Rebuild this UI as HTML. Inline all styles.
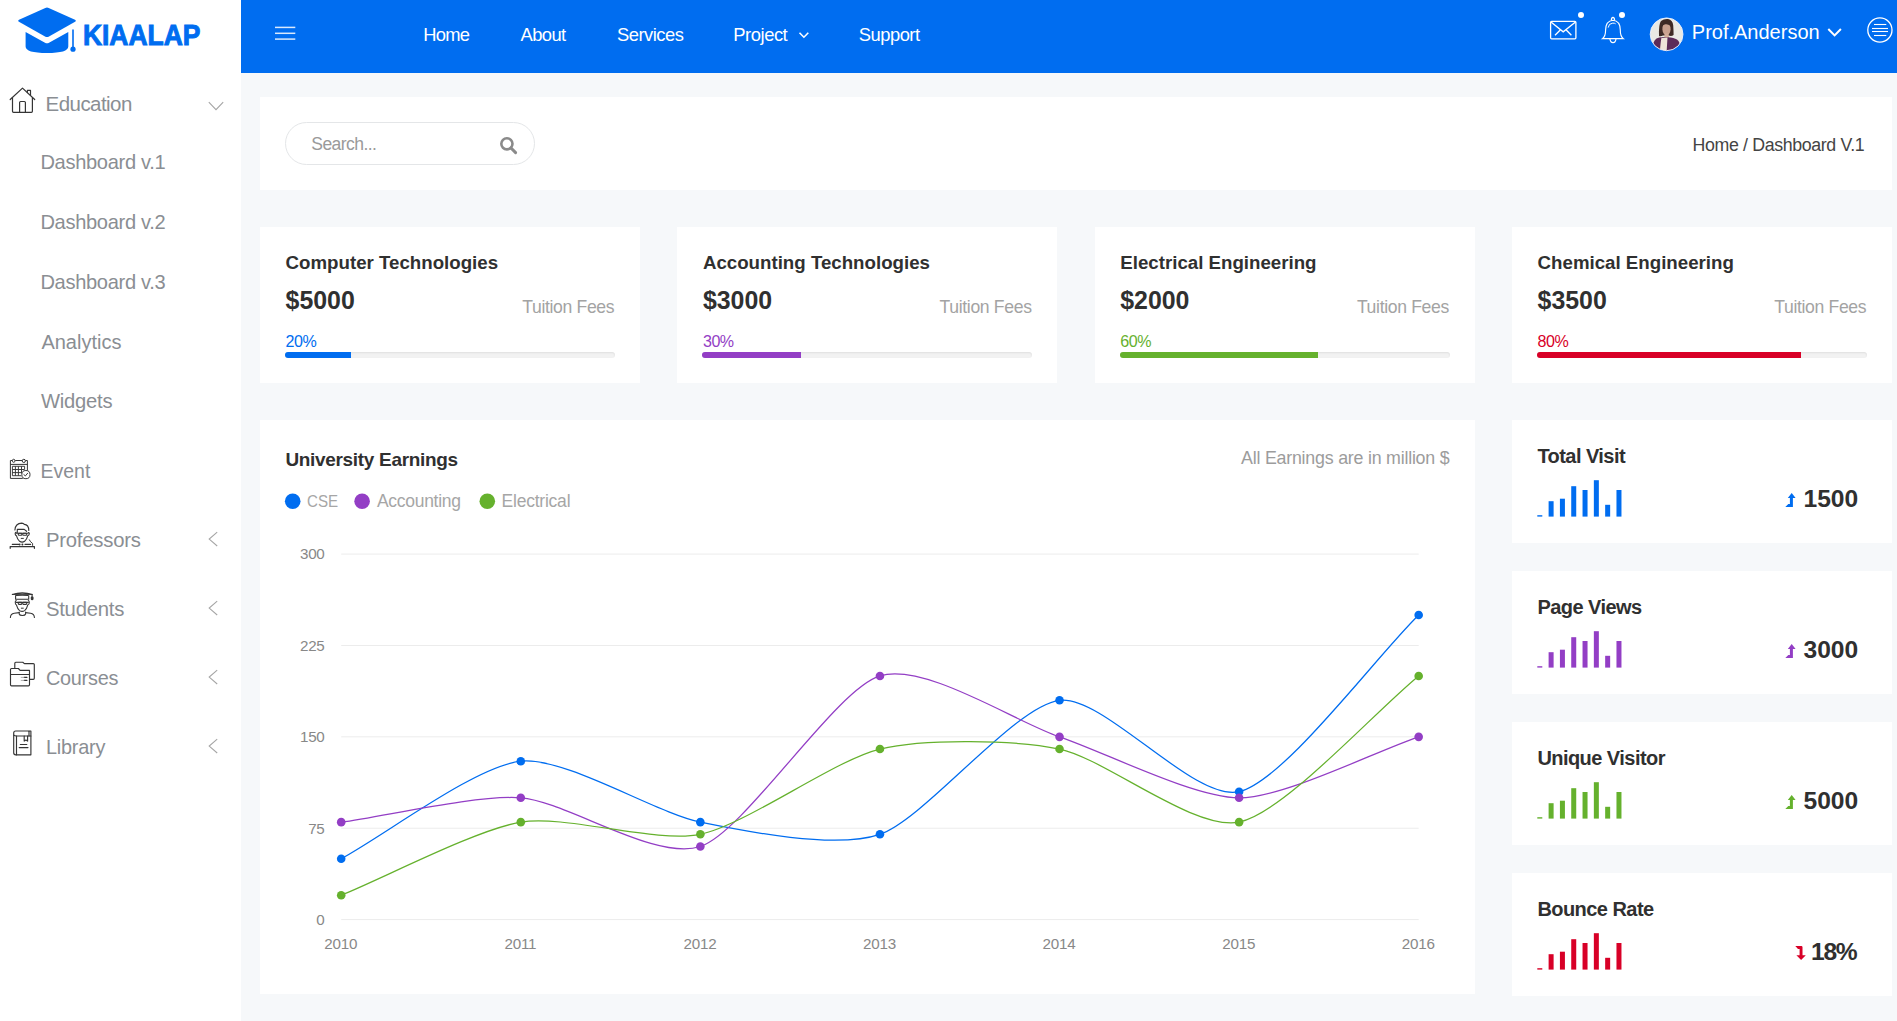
<!DOCTYPE html><html><head><meta charset="utf-8"><title>Kiaalap Dashboard</title><style>
html,body{margin:0;padding:0;}
body{width:1897px;height:1021px;overflow:hidden;position:relative;background:#F6F8FA;font-family:"Liberation Sans",sans-serif;}
.t{position:absolute;line-height:1;white-space:nowrap;}
.box{position:absolute;background:#fff;}
svg{position:absolute;overflow:visible;}
</style></head><body>
<div class="box" style="left:0;top:0;width:241px;height:1021px;background:#fff"></div>
<div class="box" style="left:241px;top:0;width:1656px;height:73px;background:#006DF0"></div>
<svg style="left:0;top:0" width="240" height="60" viewBox="0 0 240 60">
<path d="M18.5 21.6 Q17.6 20.6 19 19.8 L45.3 7.9 Q47 7.2 48.7 7.9 L75 19.8 Q76.4 20.6 75.5 21.6 L49 36.5 Q47 37.6 45 36.5 Z" fill="#006DF0"/>
<path d="M25.6 31.9 L45 42.8 Q47 43.9 49 42.8 L68.3 31.9 L68.3 46.5 Q68.3 53 47 53 Q25.6 53 25.6 46.5 Z" fill="#006DF0"/>
<rect x="72.2" y="29.5" width="1.6" height="18" fill="#006DF0"/>
<circle cx="73" cy="49.2" r="2.6" fill="#006DF0"/>
<text x="82.9" y="44.8" font-family="Liberation Sans" font-weight="bold" font-size="29.5" fill="#006DF0" stroke="#006DF0" stroke-width="1.0" textLength="117.6" lengthAdjust="spacingAndGlyphs">KIAALAP</text>
</svg>
<div class="t" style="left:45.60px;top:94.25px;font-size:20.48px;color:#8a8e93;letter-spacing:-0.542px;">Education</div>
<div class="t" style="left:40.40px;top:151.98px;font-size:20.09px;color:#8a8e93;letter-spacing:-0.313px;">Dashboard v.1</div>
<div class="t" style="left:40.40px;top:211.83px;font-size:20.09px;color:#8a8e93;letter-spacing:-0.313px;">Dashboard v.2</div>
<div class="t" style="left:40.40px;top:271.68px;font-size:20.09px;color:#8a8e93;letter-spacing:-0.313px;">Dashboard v.3</div>
<div class="t" style="left:41.40px;top:331.61px;font-size:20.0px;color:#8a8e93;">Analytics</div>
<div class="t" style="left:41.00px;top:391.29px;font-size:20.2px;color:#8a8e93;letter-spacing:-0.238px;">Widgets</div>
<div class="t" style="left:40.50px;top:461.78px;font-size:19.5px;color:#8a8e93;">Event</div>
<div class="t" style="left:45.90px;top:530.31px;font-size:20.3px;color:#8a8e93;letter-spacing:-0.211px;">Professors</div>
<div class="t" style="left:45.90px;top:599.31px;font-size:20.3px;color:#8a8e93;letter-spacing:-0.224px;">Students</div>
<div class="t" style="left:45.90px;top:668.65px;font-size:19.89px;color:#8a8e93;letter-spacing:-0.242px;">Courses</div>
<div class="t" style="left:45.90px;top:737.65px;font-size:19.89px;color:#8a8e93;letter-spacing:-0.199px;">Library</div>
<svg style="left:0;top:80px" width="40" height="40" viewBox="0 80 40 40" fill="none" stroke="#353535" stroke-width="1.2" stroke-linejoin="round" stroke-linecap="round">
<path d="M10.2 99.5 L22.5 88.1 L34.7 99.5"/><path d="M12.5 97.6 V111.3 Q12.5 112.3 13.5 112.3 H31.4 Q32.4 112.3 32.4 111.3 V97.6"/><path d="M19.6 112.3 V102.5 Q19.6 101.5 20.6 101.5 H24.4 Q25.4 101.5 25.4 102.5 V112.3"/><path d="M27.4 92.6 V90.4 H30.5 V95.3"/></svg>
<svg style="left:0;top:0" width="240" height="120"><path d="M208.8 102.2 L216 109.6 L223.2 102.2" fill="none" stroke="#a5a5a5" stroke-width="1.1"/></svg>
<svg style="left:0;top:0" width="240" height="800"><path d="M217.2 532.2 L209.2 539.1 L217.2 546.0" fill="none" stroke="#a5a5a5" stroke-width="1.1"/></svg>
<svg style="left:0;top:0" width="240" height="800"><path d="M217.2 601.2 L209.2 608.1 L217.2 615.0" fill="none" stroke="#a5a5a5" stroke-width="1.1"/></svg>
<svg style="left:0;top:0" width="240" height="800"><path d="M217.2 670.2 L209.2 677.1 L217.2 684.0" fill="none" stroke="#a5a5a5" stroke-width="1.1"/></svg>
<svg style="left:0;top:0" width="240" height="800"><path d="M217.2 739.2 L209.2 746.1 L217.2 753.0" fill="none" stroke="#a5a5a5" stroke-width="1.1"/></svg>
<svg style="left:0;top:450px" width="40" height="40" viewBox="0 450 40 40" fill="none" stroke="#353535" stroke-width="1" stroke-linejoin="round">
<path d="M12.1 460.5 H10.4 V478.4 H22.8"/><path d="M15.2 460.5 H22.1"/><path d="M25.5 460.5 H27.4 V470.5"/>
<line x1="10.4" y1="464.4" x2="27.4" y2="464.4"/>
<rect x="12.5" y="459.3" width="2.3" height="3" rx="1"/><circle cx="23.8" cy="460.9" r="1.6"/>
<path d="M12.4 475.7 V466.3 H24.6 V469.8 M12.4 469.5 H24.1 M12.4 472.6 H21.2 M12.4 475.7 H21.2 M15.4 466.3 V475.7 M18.4 466.3 V475.7 M21.5 466.3 V473.5" stroke-width="0.95"/>
<circle cx="25.9" cy="474.6" r="4.1"/><path d="M23.6 474.4 L25.4 475.9 L27.9 472.9"/></svg>
<svg style="left:0;top:515px" width="40" height="40" viewBox="0 515 40 40" fill="none" stroke="#353535" stroke-width="1.1" stroke-linejoin="round" stroke-linecap="round">
<path d="M14.9 530 Q15.3 523.3 21.8 523.1 Q23.6 523.1 24.3 524.4 Q28.7 524.6 28.8 530.5"/>
<path d="M17.3 532.6 V529.4 H24.2 L26.6 531.3"/>
<path d="M16.2 532.4 Q15 532.2 15.2 534 Q15.6 535.6 16.4 535.6 Q17.5 539.5 19.6 541.3 Q22.1 543 24.6 541.3 Q26.8 539.5 27.8 535.6 Q29 535.5 29.3 534 Q29.4 532.3 28.3 532.5"/>
<path d="M16.2 533.3 H28.3"/><rect x="18.3" y="533.3" width="3.5" height="2" rx="0.6"/><rect x="22.8" y="533.3" width="3.9" height="2" rx="0.6"/>
<path d="M21.2 538.4 H23.4" stroke-width="1"/>
<path d="M12.3 544.4 H18.6 M25 544.4 H30.6"/><circle cx="19.6" cy="544.4" r="0.45" fill="#353535"/><circle cx="22.4" cy="544.4" r="0.45" fill="#353535"/>
<path d="M10.2 548.3 V546.6 H34.4 V548.3" stroke-width="1.2"/>
<path d="M29.3 539.8 Q30.3 542 32.6 543.5 V545.4" stroke-width="1"/></svg>
<svg style="left:0;top:585px" width="40" height="40" viewBox="0 585 40 40" fill="none" stroke="#353535" stroke-width="1.1" stroke-linejoin="round" stroke-linecap="round">
<path d="M12.3 594.4 Q22.3 591 32.3 594.4 Q22.3 593.8 12.3 594.4 Z"/><path d="M16.5 595.4 Q22.3 594.9 27.8 595.4"/>
<path d="M15.6 595.5 V599.3 H28.7 V595.5"/><path d="M32.1 594.5 V597.8" /><rect x="31.3" y="597" width="1.7" height="2.6" rx="0.6" fill="#353535"/>
<path d="M16.2 600.5 Q15 600.9 15.3 603 Q15.6 604.8 16.4 604.8 Q17.5 608.8 19.6 610.6 Q22.1 612.2 24.6 610.6 Q26.8 608.8 27.8 604.8 Q29 604.7 29.3 603 Q29.4 601 28.3 600.6"/>
<path d="M16.3 602.4 H28.3"/><rect x="18.3" y="602.4" width="3.5" height="2" rx="0.6"/><rect x="22.8" y="602.4" width="3.9" height="2" rx="0.6"/>
<path d="M21.3 608.2 H23.3" stroke-width="1"/>
<path d="M19.2 612 V614 Q19.6 615.5 22.4 615.5 Q25.2 615.5 25.6 614 V612"/>
<path d="M10.4 617.5 Q10.5 613.8 14.2 613.2 L19.2 612.6 M25.6 612.6 L30.6 613.2 Q34.3 613.8 34.4 617.5"/></svg>
<svg style="left:0;top:655px" width="40" height="40" viewBox="0 655 40 40" fill="none" stroke="#353535" stroke-width="1.15" stroke-linejoin="round" stroke-linecap="round">
<path d="M14.8 667.8 V663.2 Q14.8 662.2 15.8 662.2 H22.8 L24.4 663.6 H33.3 Q34.3 663.6 34.3 664.6 V678.3 Q34.3 679.3 33.3 679.3 H30"/>
<path d="M10.5 684.8 V669.5 Q10.5 668.5 11.5 668.5 H18.4 L20.1 670.4 H29.5 V684.8 Q29.5 685.8 28.5 685.8 H11.5 Q10.5 685.8 10.5 684.8 Z"/>
<line x1="10.5" y1="674.5" x2="29.5" y2="674.5"/>
<path d="M24.2 677.4 H26.9 M24.2 680.4 H26.9" stroke-width="1.2"/><path d="M21.2 677.4 H24 M21.2 680.4 H24" stroke-width="0.8" stroke="#999"/></svg>
<svg style="left:0;top:725px" width="40" height="40" viewBox="0 725 40 40" fill="none" stroke="#353535" stroke-width="1.15" stroke-linejoin="round" stroke-linecap="round">
<path d="M15.7 731 H30.9 V754.8 H15.7 Q13.7 754.8 13.7 752.8 V733 Q13.7 731 15.7 731 Z"/>
<path d="M13.9 735.2 Q14.6 736 16.5 736 H30.9"/><path d="M16.5 736 V754.8"/><path d="M29 731.2 V736"/>
<path d="M24.2 736 V741.1 L25.9 740 L27.6 741.1 V736"/>
<path d="M20.3 744.5 H26.8 M19.2 747.6 H28"/></svg>
<div class="t" style="left:423.30px;top:25.93px;font-size:18.38px;color:#ffffff;letter-spacing:-0.778px;">Home</div>
<div class="t" style="left:520.50px;top:25.93px;font-size:18.38px;color:#ffffff;letter-spacing:-0.572px;">About</div>
<div class="t" style="left:616.90px;top:25.93px;font-size:18.38px;color:#ffffff;letter-spacing:-0.479px;">Services</div>
<div class="t" style="left:733.30px;top:25.93px;font-size:18.38px;color:#ffffff;letter-spacing:-0.454px;">Project</div>
<div class="t" style="left:858.80px;top:25.93px;font-size:18.38px;color:#ffffff;letter-spacing:-0.511px;">Support</div>
<svg style="left:0;top:0" width="1897" height="73"><g stroke="rgba(255,255,255,0.85)" stroke-width="1.5"><line x1="275" y1="27.4" x2="295.3" y2="27.4"/><line x1="275" y1="33.3" x2="295.3" y2="33.3"/><line x1="275" y1="39.1" x2="295.3" y2="39.1"/></g><path d="M799.5 32.8 L803.9 37.2 L808.3 32.8" fill="none" stroke="#fff" stroke-width="1.6"/><g fill="none" stroke="#fff" stroke-width="1.3"><rect x="1550.6" y="21.4" width="25.3" height="17.4" rx="1"/><path d="M1551 22 L1563.2 31.8 L1575.5 22"/><path d="M1555 35.3 L1560.5 29.8 M1571.4 35.3 L1566 29.8"/></g><circle cx="1581" cy="14.9" r="3" fill="#fff"/><g fill="none" stroke="#fff" stroke-width="1.15"><path d="M1613 20.3 Q1605.7 21 1605.6 30 Q1605.6 36.3 1602.5 38.6 L1623.3 38.6 Q1620.2 36.3 1620.3 30 Q1620.2 21 1613 20.3 Z"/><path d="M1611.3 20.5 Q1611.3 17.5 1613 17.4 Q1614.6 17.5 1614.6 20.5"/><path d="M1609.9 38.8 Q1610.5 42.5 1613 42.6 Q1615.5 42.5 1616 38.8"/><path d="M1608.2 27.6 Q1608.5 23.4 1612.8 23.1 Q1614.8 23.1 1615.6 23.8" stroke-width="1.0"/></g><circle cx="1622" cy="14.9" r="3" fill="#fff"/><path d="M1828.3 29 L1834.6 35.4 L1840.9 29" fill="none" stroke="#fff" stroke-width="2"/><circle cx="1879.9" cy="30" r="12.1" fill="none" stroke="#fff" stroke-width="1.3"/><g stroke="#fff" stroke-width="1.1"><line x1="1874" y1="24.5" x2="1886.3" y2="24.5"/><line x1="1872" y1="28.5" x2="1888" y2="28.5"/><line x1="1872" y1="31.5" x2="1888" y2="31.5"/><line x1="1874" y1="35.5" x2="1886.3" y2="35.5"/></g></svg>
<svg style="left:1646px;top:14px" width="42" height="42" viewBox="1646 14 42 42"><defs><clipPath id="av"><circle cx="1666.6" cy="34.3" r="16.3"/></clipPath></defs>
<g clip-path="url(#av)"><rect x="1646" y="14" width="42" height="42" fill="#e9e9e4"/>
<path d="M1659 36 Q1658.6 24 1661 21 Q1664 18.6 1668 19 Q1672.6 19.8 1673.2 25 Q1673.6 31 1673.6 35 Q1671.5 36.6 1668.5 35.5 L1663 35.5 Q1660.5 36.8 1659 36 Z" fill="#3e2a25"/>
<path d="M1662.4 29.5 Q1662 23.6 1666.4 23.4 Q1670.8 23.6 1670.6 29.5 Q1670.2 34.6 1666.5 35 Q1662.8 34.6 1662.4 29.5 Z" fill="#c9a08e"/>
<path d="M1662 25.5 Q1664 21.2 1668.5 21.8 Q1671.6 22.6 1671.8 27 Q1669.5 23.8 1665.5 24.2 Q1663.5 24.6 1662 25.5 Z" fill="#3e2a25"/>
<path d="M1664.6 33.5 H1668.6 L1669 38 H1664.2 Z" fill="#d2ab98"/>
<path d="M1652 52 Q1652.5 41 1656.5 38.6 Q1659 37.3 1662.5 37 L1665 37.5 L1668 37.2 Q1674 37.5 1677 39.6 Q1680.6 42 1681 52 Z" fill="#5c2b58"/>
<path d="M1661.5 37.4 Q1664 38.6 1667.5 37.6 L1666.6 52 L1659.8 52 Q1660.6 42 1661.5 37.4 Z" fill="#eee3d8"/>
</g><circle cx="1666.6" cy="34.3" r="16.4" fill="none" stroke="#eef3ff" stroke-width="0.9"/></svg>
<div class="t" style="left:1691.80px;top:22.26px;font-size:20.0px;color:#ffffff;">Prof.Anderson</div>
<div class="box" style="left:260px;top:97px;width:1632px;height:93px"></div>
<div style="position:absolute;left:285px;top:122px;width:248px;height:41px;border:1px solid #e4e6e8;border-radius:22px;background:#fff"></div>
<div class="t" style="left:311.30px;top:135.94px;font-size:17.55px;color:#9a9a9a;letter-spacing:-0.574px;">Search...</div>
<svg style="left:0;top:0" width="600" height="200"><circle cx="506.9" cy="143.8" r="5.6" fill="none" stroke="#8a8a8a" stroke-width="2.6"/><line x1="511" y1="148" x2="515.6" y2="152.6" stroke="#8a8a8a" stroke-width="3" stroke-linecap="round"/></svg>
<div class="t" style="right:32.66px;top:136.84px;font-size:17.78px;color:#444;letter-spacing:-0.363px;">Home / Dashboard V.1</div>
<div class="box" style="left:260.00px;top:227px;width:380px;height:156px"></div>
<div class="t" style="left:285.60px;top:253.86px;font-size:18.7px;color:#303030;font-weight:bold;">Computer Technologies</div>
<div class="t" style="left:285.60px;top:287.81px;font-size:24.9px;color:#303030;font-weight:bold;">$5000</div>
<div class="t" style="right:1282.74px;top:298.71px;font-size:17.58px;color:#a3a3a3;letter-spacing:-0.336px;">Tuition Fees</div>
<div class="t" style="left:285.60px;top:332.79px;font-size:16.07px;color:#006DF0;letter-spacing:-0.468px;">20%</div>
<div style="position:absolute;left:285.00px;top:352px;width:330px;height:6px;border-radius:3px;background:#f2f2f2;box-shadow:inset 0 1px 2px rgba(0,0,0,.08);overflow:hidden"><div style="width:20%;height:6px;background:#006DF0"></div></div>
<div class="box" style="left:677.33px;top:227px;width:380px;height:156px"></div>
<div class="t" style="left:702.93px;top:253.86px;font-size:18.7px;color:#303030;font-weight:bold;">Accounting Technologies</div>
<div class="t" style="left:702.93px;top:287.81px;font-size:24.9px;color:#303030;font-weight:bold;">$3000</div>
<div class="t" style="right:865.41px;top:298.71px;font-size:17.58px;color:#a3a3a3;letter-spacing:-0.336px;">Tuition Fees</div>
<div class="t" style="left:702.93px;top:332.79px;font-size:16.07px;color:#933EC5;letter-spacing:-0.468px;">30%</div>
<div style="position:absolute;left:702.33px;top:352px;width:330px;height:6px;border-radius:3px;background:#f2f2f2;box-shadow:inset 0 1px 2px rgba(0,0,0,.08);overflow:hidden"><div style="width:30%;height:6px;background:#933EC5"></div></div>
<div class="box" style="left:1094.66px;top:227px;width:380px;height:156px"></div>
<div class="t" style="left:1120.26px;top:253.86px;font-size:18.7px;color:#303030;font-weight:bold;">Electrical Engineering</div>
<div class="t" style="left:1120.26px;top:287.81px;font-size:24.9px;color:#303030;font-weight:bold;">$2000</div>
<div class="t" style="right:448.08px;top:298.71px;font-size:17.58px;color:#a3a3a3;letter-spacing:-0.336px;">Tuition Fees</div>
<div class="t" style="left:1120.26px;top:332.79px;font-size:16.07px;color:#65B12D;letter-spacing:-0.468px;">60%</div>
<div style="position:absolute;left:1119.66px;top:352px;width:330px;height:6px;border-radius:3px;background:#f2f2f2;box-shadow:inset 0 1px 2px rgba(0,0,0,.08);overflow:hidden"><div style="width:60%;height:6px;background:#65B12D"></div></div>
<div class="box" style="left:1511.99px;top:227px;width:380px;height:156px"></div>
<div class="t" style="left:1537.59px;top:253.86px;font-size:18.7px;color:#303030;font-weight:bold;">Chemical Engineering</div>
<div class="t" style="left:1537.59px;top:287.81px;font-size:24.9px;color:#303030;font-weight:bold;">$3500</div>
<div class="t" style="right:30.75px;top:298.71px;font-size:17.58px;color:#a3a3a3;letter-spacing:-0.336px;">Tuition Fees</div>
<div class="t" style="left:1537.59px;top:332.79px;font-size:16.07px;color:#D80027;letter-spacing:-0.468px;">80%</div>
<div style="position:absolute;left:1536.99px;top:352px;width:330px;height:6px;border-radius:3px;background:#f2f2f2;box-shadow:inset 0 1px 2px rgba(0,0,0,.08);overflow:hidden"><div style="width:80%;height:6px;background:#D80027"></div></div>
<div class="box" style="left:260px;top:420px;width:1215px;height:574px"></div>
<div class="t" style="left:285.40px;top:450.95px;font-size:18.95px;color:#303030;font-weight:bold;letter-spacing:-0.288px;">University Earnings</div>
<div class="t" style="right:447.62px;top:449.51px;font-size:17.82px;color:#9c9c9c;letter-spacing:-0.224px;">All Earnings are in million $</div>
<svg style="left:0;top:0" width="600" height="520"><circle cx="292.7" cy="501.3" r="7.8" fill="#006DF0"/></svg>
<div class="t" style="left:306.60px;top:493.40px;font-size:17.0px;color:#a6a6a6;transform:scaleX(0.89);transform-origin:0 0;">CSE</div>
<svg style="left:0;top:0" width="600" height="520"><circle cx="362.1" cy="501.3" r="7.8" fill="#933EC5"/></svg>
<div class="t" style="left:376.90px;top:492.97px;font-size:17.51px;color:#a6a6a6;letter-spacing:-0.280px;">Accounting</div>
<svg style="left:0;top:0" width="600" height="520"><circle cx="487.3" cy="501.3" r="7.8" fill="#65B12D"/></svg>
<div class="t" style="left:501.60px;top:492.97px;font-size:17.51px;color:#a6a6a6;letter-spacing:-0.230px;">Electrical</div>
<svg style="left:0;top:0" width="1897" height="1021"><line x1="341.2" y1="919.60" x2="1418.68" y2="919.60" stroke="#ececec" stroke-width="1"/><text x="324.5" y="924.90" text-anchor="end" font-family="Liberation Sans" font-size="15.2" letter-spacing="-0.3" fill="#888">0</text><line x1="341.2" y1="828.23" x2="1418.68" y2="828.23" stroke="#ececec" stroke-width="1"/><text x="324.5" y="833.52" text-anchor="end" font-family="Liberation Sans" font-size="15.2" letter-spacing="-0.3" fill="#888">75</text><line x1="341.2" y1="736.85" x2="1418.68" y2="736.85" stroke="#ececec" stroke-width="1"/><text x="324.5" y="742.15" text-anchor="end" font-family="Liberation Sans" font-size="15.2" letter-spacing="-0.3" fill="#888">150</text><line x1="341.2" y1="645.48" x2="1418.68" y2="645.48" stroke="#ececec" stroke-width="1"/><text x="324.5" y="650.77" text-anchor="end" font-family="Liberation Sans" font-size="15.2" letter-spacing="-0.3" fill="#888">225</text><line x1="341.2" y1="554.10" x2="1418.68" y2="554.10" stroke="#ececec" stroke-width="1"/><text x="324.5" y="559.40" text-anchor="end" font-family="Liberation Sans" font-size="15.2" letter-spacing="-0.3" fill="#888">300</text><text x="340.80" y="948.9" text-anchor="middle" font-family="Liberation Sans" font-size="15.2" letter-spacing="-0.2" fill="#888">2010</text><text x="520.38" y="948.9" text-anchor="middle" font-family="Liberation Sans" font-size="15.2" letter-spacing="-0.2" fill="#888">2011</text><text x="699.96" y="948.9" text-anchor="middle" font-family="Liberation Sans" font-size="15.2" letter-spacing="-0.2" fill="#888">2012</text><text x="879.54" y="948.9" text-anchor="middle" font-family="Liberation Sans" font-size="15.2" letter-spacing="-0.2" fill="#888">2013</text><text x="1059.12" y="948.9" text-anchor="middle" font-family="Liberation Sans" font-size="15.2" letter-spacing="-0.2" fill="#888">2014</text><text x="1238.70" y="948.9" text-anchor="middle" font-family="Liberation Sans" font-size="15.2" letter-spacing="-0.2" fill="#888">2015</text><text x="1418.28" y="948.9" text-anchor="middle" font-family="Liberation Sans" font-size="15.2" letter-spacing="-0.2" fill="#888">2016</text><path d="M341.20,858.68C386.09,834.32,475.88,765.79,520.78,761.22C565.67,756.65,655.47,813.00,700.36,822.13C745.25,831.27,835.05,849.55,879.94,834.32C924.84,819.09,1014.62,705.63,1059.52,700.30C1104.41,694.97,1194.21,802.34,1239.10,791.68C1284.00,781.01,1373.79,659.18,1418.68,615.02" fill="none" stroke="#006DF0" stroke-width="1.25"/><path d="M341.20,822.13C386.09,816.04,475.88,794.72,520.78,797.77C565.67,800.81,655.47,861.73,700.36,846.50C745.25,831.27,835.05,689.64,879.94,675.93C924.84,662.23,1014.62,721.62,1059.52,736.85C1104.41,752.08,1194.21,797.77,1239.10,797.77C1284.00,797.77,1373.79,752.08,1418.68,736.85" fill="none" stroke="#933EC5" stroke-width="1.25"/><path d="M341.20,895.23C386.09,876.96,475.88,829.75,520.78,822.13C565.67,814.52,655.47,843.45,700.36,834.32C745.25,825.18,835.05,759.69,879.94,749.03C924.84,738.37,1014.62,739.90,1059.52,749.03C1104.41,758.17,1194.21,831.27,1239.10,822.13C1284.00,813.00,1373.79,712.48,1418.68,675.93" fill="none" stroke="#65B12D" stroke-width="1.25"/><circle cx="341.20" cy="858.68" r="4.3" fill="#006DF0"/><circle cx="520.78" cy="761.22" r="4.3" fill="#006DF0"/><circle cx="700.36" cy="822.13" r="4.3" fill="#006DF0"/><circle cx="879.94" cy="834.32" r="4.3" fill="#006DF0"/><circle cx="1059.52" cy="700.30" r="4.3" fill="#006DF0"/><circle cx="1239.10" cy="791.68" r="4.3" fill="#006DF0"/><circle cx="1418.68" cy="615.02" r="4.3" fill="#006DF0"/><circle cx="341.20" cy="822.13" r="4.3" fill="#933EC5"/><circle cx="520.78" cy="797.77" r="4.3" fill="#933EC5"/><circle cx="700.36" cy="846.50" r="4.3" fill="#933EC5"/><circle cx="879.94" cy="675.93" r="4.3" fill="#933EC5"/><circle cx="1059.52" cy="736.85" r="4.3" fill="#933EC5"/><circle cx="1239.10" cy="797.77" r="4.3" fill="#933EC5"/><circle cx="1418.68" cy="736.85" r="4.3" fill="#933EC5"/><circle cx="341.20" cy="895.23" r="4.3" fill="#65B12D"/><circle cx="520.78" cy="822.13" r="4.3" fill="#65B12D"/><circle cx="700.36" cy="834.32" r="4.3" fill="#65B12D"/><circle cx="879.94" cy="749.03" r="4.3" fill="#65B12D"/><circle cx="1059.52" cy="749.03" r="4.3" fill="#65B12D"/><circle cx="1239.10" cy="822.13" r="4.3" fill="#65B12D"/><circle cx="1418.68" cy="675.93" r="4.3" fill="#65B12D"/></svg>
<div class="box" style="left:1512px;top:420px;width:380px;height:122.5px"></div>
<div class="t" style="left:1537.40px;top:445.96px;font-size:20.0px;color:#303030;font-weight:bold;letter-spacing:-0.55px;">Total Visit</div>
<div class="t" style="right:38.80px;top:486.56px;font-size:24.6px;color:#303030;font-weight:bold;">1500</div>
<svg style="left:0;top:0" width="1897" height="1021"><rect x="1537.30" y="515.20" width="5.0" height="1.40" fill="#006DF0"/><rect x="1548.61" y="501.20" width="5.0" height="15.40" fill="#006DF0"/><rect x="1559.92" y="498.70" width="5.0" height="17.90" fill="#006DF0"/><rect x="1571.23" y="486.20" width="5.0" height="30.40" fill="#006DF0"/><rect x="1582.54" y="490.00" width="5.0" height="26.60" fill="#006DF0"/><rect x="1593.85" y="480.20" width="5.0" height="36.40" fill="#006DF0"/><rect x="1605.16" y="504.80" width="5.0" height="11.80" fill="#006DF0"/><rect x="1616.47" y="490.00" width="5.0" height="26.60" fill="#006DF0"/></svg>
<svg style="left:0;top:0" width="1897" height="1021"><path d="M1791.7,492.9 L1795.6,497.9 L1792.8999999999999,497.9 L1792.8999999999999,506.9 L1785.3,506.9 L1788.3,503.9 L1789.8999999999999,503.9 L1789.8999999999999,497.9 L1787.8,497.9 Z" fill="#006DF0"/></svg>
<div class="box" style="left:1512px;top:571px;width:380px;height:122.5px"></div>
<div class="t" style="left:1537.40px;top:596.96px;font-size:20.0px;color:#303030;font-weight:bold;letter-spacing:-0.55px;">Page Views</div>
<div class="t" style="right:38.80px;top:637.56px;font-size:24.6px;color:#303030;font-weight:bold;">3000</div>
<svg style="left:0;top:0" width="1897" height="1021"><rect x="1537.30" y="666.20" width="5.0" height="1.40" fill="#933EC5"/><rect x="1548.61" y="652.20" width="5.0" height="15.40" fill="#933EC5"/><rect x="1559.92" y="649.70" width="5.0" height="17.90" fill="#933EC5"/><rect x="1571.23" y="637.20" width="5.0" height="30.40" fill="#933EC5"/><rect x="1582.54" y="641.00" width="5.0" height="26.60" fill="#933EC5"/><rect x="1593.85" y="631.20" width="5.0" height="36.40" fill="#933EC5"/><rect x="1605.16" y="655.80" width="5.0" height="11.80" fill="#933EC5"/><rect x="1616.47" y="641.00" width="5.0" height="26.60" fill="#933EC5"/></svg>
<svg style="left:0;top:0" width="1897" height="1021"><path d="M1791.7,643.9 L1795.6,648.9 L1792.8999999999999,648.9 L1792.8999999999999,657.9 L1785.3,657.9 L1788.3,654.9 L1789.8999999999999,654.9 L1789.8999999999999,648.9 L1787.8,648.9 Z" fill="#933EC5"/></svg>
<div class="box" style="left:1512px;top:722px;width:380px;height:122.5px"></div>
<div class="t" style="left:1537.40px;top:747.96px;font-size:20.0px;color:#303030;font-weight:bold;letter-spacing:-0.55px;">Unique Visitor</div>
<div class="t" style="right:38.80px;top:788.56px;font-size:24.6px;color:#303030;font-weight:bold;">5000</div>
<svg style="left:0;top:0" width="1897" height="1021"><rect x="1537.30" y="817.20" width="5.0" height="1.40" fill="#65B12D"/><rect x="1548.61" y="803.20" width="5.0" height="15.40" fill="#65B12D"/><rect x="1559.92" y="800.70" width="5.0" height="17.90" fill="#65B12D"/><rect x="1571.23" y="788.20" width="5.0" height="30.40" fill="#65B12D"/><rect x="1582.54" y="792.00" width="5.0" height="26.60" fill="#65B12D"/><rect x="1593.85" y="782.20" width="5.0" height="36.40" fill="#65B12D"/><rect x="1605.16" y="806.80" width="5.0" height="11.80" fill="#65B12D"/><rect x="1616.47" y="792.00" width="5.0" height="26.60" fill="#65B12D"/></svg>
<svg style="left:0;top:0" width="1897" height="1021"><path d="M1791.7,794.9 L1795.6,799.9 L1792.8999999999999,799.9 L1792.8999999999999,808.9 L1785.3,808.9 L1788.3,805.9 L1789.8999999999999,805.9 L1789.8999999999999,799.9 L1787.8,799.9 Z" fill="#65B12D"/></svg>
<div class="box" style="left:1512px;top:873px;width:380px;height:122.5px"></div>
<div class="t" style="left:1537.40px;top:898.96px;font-size:20.0px;color:#303030;font-weight:bold;letter-spacing:-0.55px;">Bounce Rate</div>
<div class="t" style="right:40.60px;top:940.16px;font-size:24.6px;color:#303030;font-weight:bold;letter-spacing:-1.3px;">18%</div>
<svg style="left:0;top:0" width="1897" height="1021"><rect x="1537.30" y="968.20" width="5.0" height="1.40" fill="#D80027"/><rect x="1548.61" y="954.20" width="5.0" height="15.40" fill="#D80027"/><rect x="1559.92" y="951.70" width="5.0" height="17.90" fill="#D80027"/><rect x="1571.23" y="939.20" width="5.0" height="30.40" fill="#D80027"/><rect x="1582.54" y="943.00" width="5.0" height="26.60" fill="#D80027"/><rect x="1593.85" y="933.20" width="5.0" height="36.40" fill="#D80027"/><rect x="1605.16" y="957.80" width="5.0" height="11.80" fill="#D80027"/><rect x="1616.47" y="943.00" width="5.0" height="26.60" fill="#D80027"/></svg>
<svg style="left:0;top:0" width="1897" height="1021"><path d="M1795.3,946.1 L1801.7,946.1 L1802.5,946.7 L1802.5,955.3000000000001 L1805.8,955.3000000000001 L1801.1,960.0 L1796.3999999999999,955.3000000000001 L1799.6,955.3000000000001 L1799.6,949.1 L1798.0,949.1 Z" fill="#D80027"/></svg>
</body></html>
